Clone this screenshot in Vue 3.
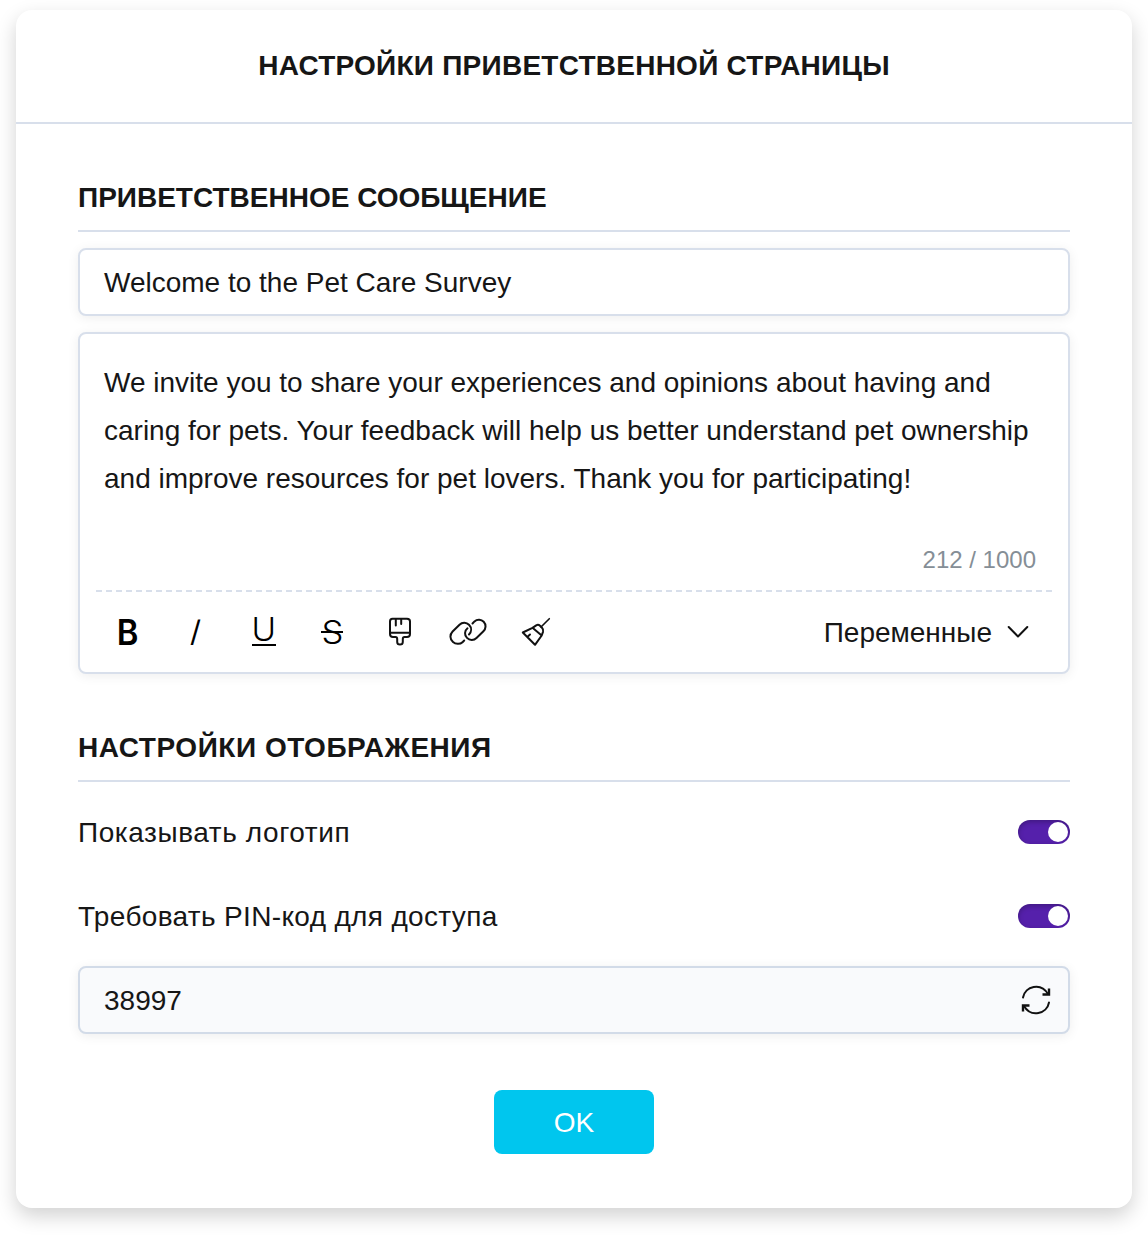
<template>
  <div class="modal">
    <header class="modal-header">
      <h1 class="title">НАСТРОЙКИ ПРИВЕТСТВЕННОЙ СТРАНИЦЫ</h1>
    </header>

    <div class="modal-body">
      <h2 class="section-title section-title--message">ПРИВЕТСТВЕННОЕ СООБЩЕНИЕ</h2>
      <div class="field"><span>{{ subject }}</span></div>

      <div class="editor">
        <div class="editor-text">
          <div v-for="(line, i) in message" :key="i">{{ line }}</div>
        </div>
        <div class="counter">212 / 1000</div>
        <div class="divider"></div>
        <div class="toolbar">
          <button class="tool"><span class="glyph glyph--bold">B</span></button>
          <button class="tool"><span class="glyph glyph--italic">I</span></button>
          <button class="tool glyph--underline"><span class="glyph">U</span></button>
          <button class="tool glyph--strike"><span class="glyph">S</span></button>
          <button class="tool">
            <svg width="40" height="40" viewBox="0 0 40 40">
              <path d="M12.500 6.800H27Q30 6.800 30 9.500V22Q30 25 27 25H24.500Q22.800 25 22.800 27V30Q22.800 32.500 20 32.500T17.200 30V27Q17.200 25 15.500 25H13Q10 25 10 22V9.500Q10 6.800 12.500 6.800M10 20.800H30M15.800 7V13.500M21.200 7V12" />
            </svg>
          </button>
          <button class="tool">
            <svg width="40" height="40" viewBox="0 0 40 40">
              <path d="M16.200 28.500L14.500 30.200C12 32.600 7.500 32.300 5 30C1.600 27 1.700 22.500 4.600 19.500L11.500 12.700C14.400 9.900 18.500 10.300 21 12.800C23.800 15.700 23.700 19.600 21 22.500" />
              <path d="M24.500 11.500L26.500 9.400C29.300 6.800 33.300 7.300 35.700 9.800C38.400 12.700 38 16.700 35.400 19.300L28.500 26C25.700 28.800 21.600 28.500 19 25.900C16.200 23 16.400 18.900 19.500 16.300" />
            </svg>
          </button>
          <button class="tool">
            <svg width="40" height="40" viewBox="0 0 40 40">
              <path class="handle" d="M33.300 6.700L25 15" />
              <path d="M6.800 20.500L16.500 15.800L20.200 13.300Q22.300 12.200 24 13.700L26 15.700Q27.700 17.400 27 19.800L25.700 23.500L19 32.800ZM16.500 15.800L25.700 23.500M11.300 25L14 22.500" />
            </svg>
          </button>
          <div class="variables">
            <span>Переменные</span>
            <svg width="24" height="16" viewBox="0 0 24 16"><path d="M2.700 3L12 12.500L21.300 3" /></svg>
          </div>
        </div>
      </div>

      <h2 class="section-title section-title--display">НАСТРОЙКИ ОТОБРАЖЕНИЯ</h2>
      <div v-for="item in options" :key="item.label" class="option">
        <span :class="item.name">{{ item.label }}</span>
        <button class="switch" :class="{ 'switch--on': item.enabled }" @click="item.enabled = !item.enabled">
          <span class="knob"></span>
        </button>
      </div>

      <div class="field field--pin">
        <span>38997</span>
        <svg width="32" height="32" viewBox="0 0 32 32">
          <path d="M3 13.500C5 2 21 -2 28 10M29 18.500C27 30 11 34 4 22" />
          <path class="arrow" d="M29 4.500V10.500H22.500M3 27.500V21.500H9.500" />
        </svg>
      </div>

      <button class="ok">OK</button>
    </div>
  </div>
</template>

<script setup>
import { ref } from 'vue';

const subject = ref('Welcome to the Pet Care Survey');

const message = [
  'We invite you to share your experiences and opinions about having and',
  'caring for pets. Your feedback will help us better understand pet ownership',
  'and improve resources for pet lovers. Thank you for participating!'
];

const options = ref([
  { name: 'logo', label: 'Показывать логотип', enabled: true },
  { name: 'pin', label: 'Требовать PIN-код для доступа', enabled: true }
]);
</script>

<style>
body {
  margin: 0;
  background: #fff;
}
</style>

<style scoped>
* {
  box-sizing: border-box;
}

.modal {
  width: 1116px;
  height: 1198px;
  margin: 10px 16px 30px;
  border-radius: 16px;
  background: #fff;
  box-shadow: 0 8px 20px rgba(0, 0, 0, 0.18);
  color: #161616;
  font-family: "Liberation Sans", Arial, sans-serif;
  font-size: 28px;
  line-height: 32px;
}

button {
  padding: 0;
  border: 0;
  background: none;
  color: inherit;
  font: inherit;
}

svg {
  display: block;
  fill: none;
  stroke: #111;
  stroke-width: 2;
  stroke-linecap: round;
  stroke-linejoin: round;
}

.modal-header {
  height: 114px;
  padding-top: 40px;
  border-bottom: 2px solid #d8dfeb;
  text-align: center;
}

.title,
.section-title {
  margin: 0;
  font-size: 28px;
  font-weight: 700;
  line-height: 32px;
  white-space: nowrap;
}

.title {
  letter-spacing: 0.25px;
}

.modal-body {
  display: flex;
  flex-direction: column;
  padding: 58px 62px 0;
}

.section-title {
  height: 50px;
  border-bottom: 2px solid #d8dfeb;
}

.section-title--message {
  margin-bottom: 16px;
}

.section-title--display {
  margin-top: 58px;
  margin-bottom: 8px;
  letter-spacing: 0.53px;
}

.field {
  display: flex;
  align-items: center;
  height: 68px;
  padding: 0 16px 0 24px;
  border: 2px solid #d8dfeb;
  border-radius: 8px;
  background: #fff;
  box-shadow: 0 2px 12px rgba(0, 0, 0, 0.07);
}

.field > span {
  padding-top: 2px;
}

.field--pin {
  justify-content: space-between;
  margin-top: 8px;
  border-color: #d2dbe8;
  background: #f9fafc;
}

.editor {
  height: 342px;
  margin-top: 16px;
  padding: 25px 16px 0;
  border: 2px solid #d8dfeb;
  border-radius: 8px;
  background: #fff;
  box-shadow: 0 2px 12px rgba(0, 0, 0, 0.07);
}

.editor-text {
  height: 185px;
  padding: 0 8px;
  line-height: 48px;
  white-space: nowrap;
}

.counter {
  height: 46px;
  padding-right: 16px;
  color: #858e96;
  font-size: 24px;
  text-align: right;
}

.divider {
  height: 2px;
  background: repeating-linear-gradient(90deg, #d8dfeb 0 6px, transparent 6px 10px);
}

.toolbar {
  display: flex;
  align-items: center;
  height: 80px;
  padding: 0 22px 0 12px;
}

.tool {
  position: relative;
  display: flex;
  align-items: center;
  justify-content: center;
  width: 40px;
  height: 40px;
  margin-right: 28px;
}

.glyph {
  color: #000;
  font-family: Inter, sans-serif;
  font-size: 32px;
  font-weight: 300;
  line-height: 40px;
}

.glyph--bold {
  font-size: 35px;
  font-weight: 600;
  transform: scaleX(0.94);
}

.glyph--italic {
  font-size: 35px;
  transform: skewX(-16deg);
}

.glyph--underline .glyph {
  font-size: 32px;
  transform: translateY(-2px) scaleX(1.04);
}

.glyph--strike .glyph {
  font-size: 33px;
  transform: scaleX(1.05);
}

.glyph--underline::after,
.glyph--strike::after {
  content: '';
  position: absolute;
  top: 32px;
  left: 8px;
  width: 24px;
  height: 2px;
  background: #000;
}

.glyph--strike::after {
  top: 19px;
  left: 9px;
  width: 22px;
}

.handle {
  stroke-width: 1.6;
}

.variables {
  display: flex;
  align-items: center;
  gap: 14px;
  margin-left: auto;
}

.variables span {
  padding-top: 2px;
}

.option {
  display: flex;
  align-items: center;
  justify-content: space-between;
  height: 84px;
}

.option > span {
  padding-top: 2px;
}

.logo {
  letter-spacing: 0.57px;
}

.pin {
  letter-spacing: 0.34px;
}

.switch {
  display: flex;
  align-items: center;
  width: 52px;
  height: 24px;
  padding: 2px;
  border-radius: 12px;
  background: #b8bfca;
  box-shadow: inset 0 2px 5px rgba(0, 0, 0, 0.25);
}

.switch--on {
  justify-content: flex-end;
  background: #5520ab;
}

.knob {
  width: 20px;
  height: 20px;
  border-radius: 50%;
  background: #fff;
}

.arrow {
  stroke-width: 2.4;
  stroke-linecap: butt;
  stroke-linejoin: miter;
}

.ok {
  align-self: center;
  width: 160px;
  height: 64px;
  margin-top: 56px;
  padding-top: 1px;
  border-radius: 8px;
  background: #00c6ee;
  color: #fff;
}
</style>
